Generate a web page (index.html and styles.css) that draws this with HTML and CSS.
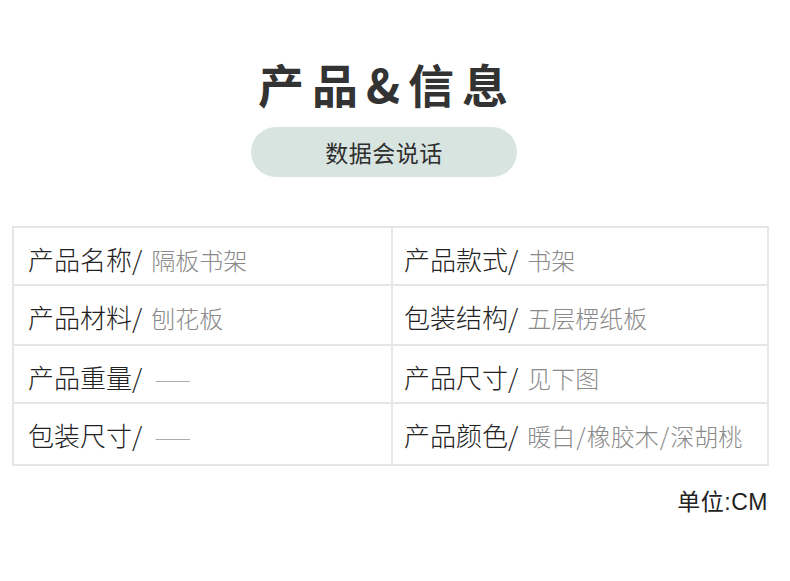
FILE: index.html
```html
<!DOCTYPE html>
<html lang="zh-CN">
<head>
<meta charset="utf-8">
<link rel="stylesheet" href="styles.css">
</head>
<body>
<div class="page">
  <header class="head">
    <h1 class="title">产品&amp;信息</h1>
    <div class="pill">数据会说话</div>
  </header>
  <div class="spec">
    <div class="cell"><span class="k">产品名称/</span><span class="v">隔板书架</span></div>
    <div class="cell right"><span class="k">产品款式/</span><span class="v">书架</span></div>
    <div class="cell"><span class="k">产品材料/</span><span class="v">刨花板</span></div>
    <div class="cell right"><span class="k">包装结构/</span><span class="v">五层楞纸板</span></div>
    <div class="cell"><span class="k">产品重量/</span><span class="v dash">——</span></div>
    <div class="cell right"><span class="k">产品尺寸/</span><span class="v">见下图</span></div>
    <div class="cell"><span class="k">包装尺寸/</span><span class="v dash">——</span></div>
    <div class="cell right"><span class="k">产品颜色/</span><span class="v">暖白<span class="sl">/</span>橡胶木<span class="sl">/</span>深胡桃</span></div>
  </div>
  <div class="unit">单位:CM</div>
</div>
</body>
</html>
```
FILE: styles.css
```css
html, body {
  margin: 0;
  padding: 0;
  background: #ffffff;
}
body {
  font-family: "Noto Sans CJK SC", "Noto Sans", sans-serif;
  color: #222;
}
.page {
  width: 790px;
  height: 581px;
  overflow: hidden;
}
.head {
  width: 768px;
  display: flex;
  flex-direction: column;
  align-items: center;
  padding-top: 53px;
}
.title {
  margin: 0;
  font-size: 46px;
  line-height: 60px;
  font-weight: 700;
  letter-spacing: 8px;
  padding-left: 6px;
  color: #333;
}
.pill {
  margin-top: 14px;
  width: 266px;
  height: 50px;
  border-radius: 25px;
  background: #d8e4e0;
  color: #2e2e2e;
  font-size: 23px;
  font-weight: 400;
  display: flex;
  align-items: center;
  justify-content: center;
  letter-spacing: 0.5px;
}
.spec {
  margin: 49px 0 0 12px;
  width: 757px;
  box-sizing: border-box;
  display: grid;
  grid-template-columns: 379px 376px;
  grid-template-rows: 58px 60px 58px 62px;
  border-top: 2px solid #e6e6e6;
  border-left: 2px solid #e6e6e6;
}
.cell {
  box-sizing: border-box;
  border-right: 2px solid #e6e6e6;
  border-bottom: 2px solid #e6e6e6;
  padding: 17px 0 0 14px;
  white-space: nowrap;
  line-height: 28px;
}
.cell.right {
  padding-left: 11px;
}
.k {
  font-size: 26px;
  font-weight: 300;
  color: #222;
}
.v {
  font-size: 24px;
  font-weight: 300;
  color: #8a8a8a;
  margin-left: 9px;
}
.sl {
  margin: 0 1px;
}
.v.dash {
  font-size: 18.5px;
  color: #999;
  margin-left: 12px;
}
.unit {
  width: 768px;
  text-align: right;
  margin-top: 17px;
  font-size: 23px;
  letter-spacing: 0.5px;
  font-family: "Liberation Sans", "Noto Sans CJK SC", sans-serif;
  color: #222;
}
```
